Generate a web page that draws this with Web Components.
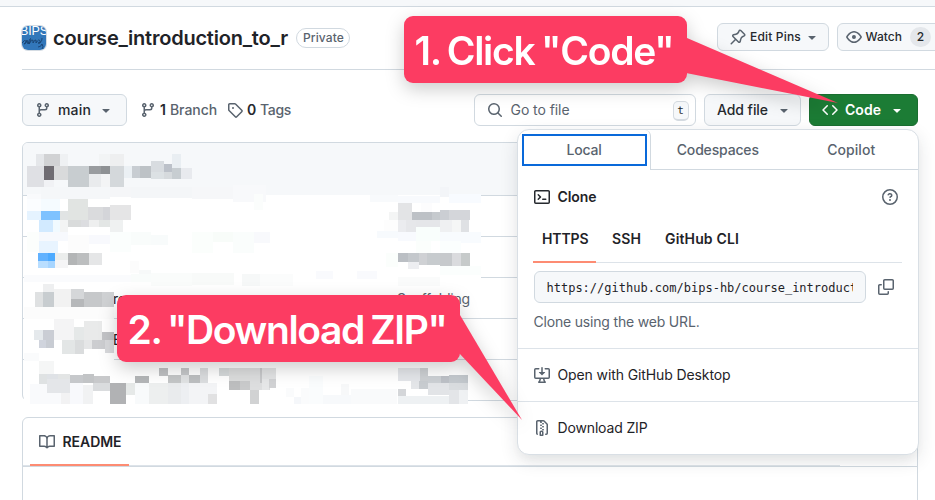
<!DOCTYPE html>
<html lang="en"><head><meta charset="utf-8"><title>course_introduction_to_r</title>
<style>
html,body{margin:0;padding:0;background:#fff}
body{width:935px;height:500px;overflow:hidden;font:14px/20px Inter,"Liberation Sans",sans-serif;color:#1f2328}
</style></head><body>
<repo-page></repo-page>
<script>
const ICONS={
branch:'M9.5 3.25a2.25 2.25 0 1 1 3 2.122V6A2.5 2.5 0 0 1 10 8.5H6a1 1 0 0 0-1 1v1.128a2.251 2.251 0 1 1-1.5 0V5.372a2.25 2.25 0 1 1 1.5 0v1.836A2.493 2.493 0 0 1 6 7h4a1 1 0 0 0 1-1v-.628A2.25 2.25 0 0 1 9.5 3.25Zm-6 0a.75.75 0 1 0 1.5 0 .75.75 0 0 0-1.5 0Zm8.25-.75a.75.75 0 1 0 0 1.5.75.75 0 0 0 0-1.5ZM4.25 12a.75.75 0 1 0 0 1.5.75.75 0 0 0 0-1.5Z',
tag:'M1 7.775V2.75C1 1.784 1.784 1 2.75 1h5.025c.464 0 .91.184 1.238.513l6.25 6.25a1.75 1.75 0 0 1 0 2.474l-5.026 5.026a1.75 1.75 0 0 1-2.474 0l-6.25-6.25A1.752 1.752 0 0 1 1 7.775Zm1.5 0c0 .066.026.13.073.177l6.25 6.25a.25.25 0 0 0 .354 0l5.025-5.025a.25.25 0 0 0 0-.354l-6.25-6.25a.25.25 0 0 0-.177-.073H2.75a.25.25 0 0 0-.25.25ZM6 5a1 1 0 1 1 0 2 1 1 0 0 1 0-2Z',
pin:'m11.294.984 3.722 3.722a1.75 1.75 0 0 1-.504 2.826l-1.327.613a3.089 3.089 0 0 0-1.707 2.084l-.584 2.454c-.317 1.332-1.972 1.8-2.94.832L5.75 11.311 1.78 15.28a.749.749 0 1 1-1.06-1.06l3.969-3.97-2.204-2.204c-.968-.968-.5-2.623.832-2.94l2.454-.584a3.08 3.08 0 0 0 2.084-1.707l.613-1.327a1.75 1.75 0 0 1 2.826-.504ZM6.283 9.723l2.732 2.731a.25.25 0 0 0 .42-.119l.584-2.454a4.586 4.586 0 0 1 2.537-3.098l1.328-.613a.25.25 0 0 0 .072-.404l-3.722-3.722a.25.25 0 0 0-.404.072l-.613 1.328a4.584 4.584 0 0 1-3.098 2.537l-2.454.584a.25.25 0 0 0-.119.42l2.731 2.732Z',
eye:'M8 2c1.981 0 3.671.992 4.933 2.078 1.27 1.091 2.187 2.345 2.637 3.023a1.62 1.62 0 0 1 0 1.798c-.45.678-1.367 1.932-2.637 3.023C11.67 13.008 9.981 14 8 14c-1.981 0-3.671-.992-4.933-2.078C1.797 10.83.88 9.576.43 8.898a1.62 1.62 0 0 1 0-1.798c.45-.677 1.367-1.931 2.637-3.022C4.33 2.992 6.019 2 8 2ZM1.679 7.932a.12.12 0 0 0 0 .136c.411.622 1.241 1.75 2.366 2.717C5.176 11.758 6.527 12.5 8 12.5c1.473 0 2.825-.742 3.955-1.715 1.124-.967 1.954-2.096 2.366-2.717a.12.12 0 0 0 0-.136c-.412-.621-1.242-1.75-2.366-2.717C10.824 4.242 9.473 3.5 8 3.5c-1.473 0-2.825.742-3.955 1.715-1.124.967-1.954 2.096-2.366 2.717ZM8 10a2 2 0 1 1-.001-3.999A2 2 0 0 1 8 10Z',
search:'M10.68 11.74a6 6 0 0 1-7.922-8.982 6 6 0 0 1 8.982 7.922l3.04 3.04a.749.749 0 1 1-1.06 1.06ZM11.5 7a4.499 4.499 0 1 0-8.997 0A4.499 4.499 0 0 0 11.5 7Z',
code:'m11.28 3.22 4.25 4.25a.75.75 0 0 1 0 1.06l-4.25 4.25a.749.749 0 1 1-1.06-1.06L13.94 8l-3.72-3.72a.749.749 0 1 1 1.06-1.06Zm-6.56 0a.75.75 0 0 1 1.042.018.75.75 0 0 1 .018 1.042L2.06 8l3.72 3.72a.749.749 0 1 1-1.06 1.06L.47 8.53a.75.75 0 0 1 0-1.06Z',
terminal:'M0 2.75C0 1.784.784 1 1.75 1h12.5c.966 0 1.75.784 1.75 1.75v10.5A1.75 1.75 0 0 1 14.25 15H1.75A1.75 1.75 0 0 1 0 13.25Zm1.75-.25a.25.25 0 0 0-.25.25v10.5c0 .138.112.25.25.25h12.5a.25.25 0 0 0 .25-.25V2.75a.25.25 0 0 0-.25-.25ZM7.25 8a.749.749 0 0 1-.22.53l-2.25 2.25a.749.749 0 1 1-1.06-1.06L5.44 8 3.72 6.28a.749.749 0 1 1 1.06-1.06l2.25 2.25c.141.14.22.331.22.53Zm1.5 1.5h3a.75.75 0 0 1 0 1.5h-3a.75.75 0 0 1 0-1.5Z',
question:'M0 8a8 8 0 1 1 16 0A8 8 0 0 1 0 8Zm8-6.5a6.5 6.5 0 1 0 0 13 6.5 6.5 0 0 0 0-13ZM6.92 6.085h.001a.749.749 0 1 1-1.342-.67c.169-.339.436-.701.849-.977C6.845 4.16 7.369 4 8 4a2.756 2.756 0 0 1 1.637.525c.503.377.863.965.863 1.725 0 .448-.115.83-.329 1.15-.205.307-.47.513-.692.662-.109.072-.22.138-.313.195l-.006.004a6.24 6.24 0 0 0-.26.16.952.952 0 0 0-.276.245.75.75 0 0 1-1.248-.832c.184-.264.42-.489.692-.661.103-.067.207-.132.313-.195l.007-.004c.1-.061.182-.11.258-.161a.969.969 0 0 0 .277-.245C8.96 6.514 9 6.427 9 6.25a.612.612 0 0 0-.262-.525A1.27 1.27 0 0 0 8 5.5c-.369 0-.595.09-.74.187a1.01 1.01 0 0 0-.34.398ZM9 11a1 1 0 1 1-2 0 1 1 0 0 1 2 0Z',
copy:'M0 6.75C0 5.784.784 5 1.75 5h1.5a.75.75 0 0 1 0 1.5h-1.5a.25.25 0 0 0-.25.25v7.5c0 .138.112.25.25.25h7.5a.25.25 0 0 0 .25-.25v-1.5a.75.75 0 0 1 1.5 0v1.5A1.75 1.75 0 0 1 9.25 16h-7.5A1.75 1.75 0 0 1 0 14.25ZM5 1.75C5 .784 5.784 0 6.75 0h7.5C15.216 0 16 .784 16 1.75v7.5A1.75 1.75 0 0 1 14.25 11h-7.5A1.75 1.75 0 0 1 5 9.25Zm1.75-.25a.25.25 0 0 0-.25.25v7.5c0 .138.112.25.25.25h7.5a.25.25 0 0 0 .25-.25v-7.5a.25.25 0 0 0-.25-.25Z',
desktop:'m4.927 5.427 2.896 2.896a.25.25 0 0 0 .354 0l2.896-2.896A.25.25 0 0 0 10.896 5H8.75V.75a.75.75 0 1 0-1.5 0V5H5.104a.25.25 0 0 0-.177.427Z M1.573 2.573a.25.25 0 0 0-.073.177v7.5a.25.25 0 0 0 .25.25h12.5a.25.25 0 0 0 .25-.25v-7.5a.25.25 0 0 0-.25-.25h-3a.75.75 0 1 1 0-1.5h3A1.75 1.75 0 0 1 16 2.75v7.5A1.75 1.75 0 0 1 14.25 12h-3.727c.099 1.041.52 1.872 1.292 2.757A.752.752 0 0 1 11.25 16h-6.5a.75.75 0 0 1-.565-1.243c.772-.885 1.192-1.716 1.292-2.757H1.75A1.75 1.75 0 0 1 0 10.25v-7.5A1.75 1.75 0 0 1 1.75 1h3a.75.75 0 0 1 0 1.5h-3a.25.25 0 0 0-.177.073ZM6.982 12a5.72 5.72 0 0 1-.765 2.5h3.566a5.72 5.72 0 0 1-.765-2.5H6.982Z',
zip:'M3.5 1.75v11.5c0 .09.048.173.126.217a.75.75 0 0 1-.752 1.298A1.748 1.748 0 0 1 2 13.25V1.75C2 .784 2.784 0 3.75 0h5.586c.464 0 .909.185 1.237.513l2.914 2.914c.329.328.513.773.513 1.237v8.586A1.75 1.75 0 0 1 12.25 15h-.5a.75.75 0 0 1 0-1.5h.5a.25.25 0 0 0 .25-.25V4.664a.25.25 0 0 0-.073-.177L9.513 1.573a.25.25 0 0 0-.177-.073H7.25a.75.75 0 0 1 0 1.5h-.5a.75.75 0 0 1-.75-.75V1.5H3.75a.25.25 0 0 0-.25.25Zm3.75 8.75h.5c.966 0 1.75.784 1.75 1.75v3a.75.75 0 0 1-.75.75h-2.5a.75.75 0 0 1-.75-.75v-3c0-.966.784-1.75 1.75-1.75ZM6 5.25a.75.75 0 0 1 .75-.75h.5a.75.75 0 0 1 0 1.5h-.5A.75.75 0 0 1 6 5.25Zm.75 2.25h.5a.75.75 0 0 1 0 1.5h-.5a.75.75 0 0 1 0-1.5ZM8 6.75A.75.75 0 0 1 8.75 6h.5a.75.75 0 0 1 0 1.5h-.5A.75.75 0 0 1 8 6.75ZM8.75 3h.5a.75.75 0 0 1 0 1.5h-.5a.75.75 0 0 1 0-1.5ZM8 9.75A.75.75 0 0 1 8.75 9h.5a.75.75 0 0 1 0 1.5h-.5A.75.75 0 0 1 8 9.75ZM7 12.25v2.25h1v-2.25a.25.25 0 0 0-.25-.25h-.5a.25.25 0 0 0-.25.25Z',
book:'M0 1.75A.75.75 0 0 1 .75 1h4.253c1.227 0 2.317.59 3 1.501A3.743 3.743 0 0 1 11.006 1h4.245a.75.75 0 0 1 .75.75v10.5a.75.75 0 0 1-.75.75h-4.507a2.25 2.25 0 0 0-1.591.659l-.622.621a.75.75 0 0 1-1.06 0l-.622-.621A2.25 2.25 0 0 0 5.258 13H.75a.75.75 0 0 1-.75-.75Zm7.251 10.324.004-5.073-.002-2.253A2.25 2.25 0 0 0 5.003 2.5H1.5v9h3.757a3.75 3.75 0 0 1 1.994.574ZM8.755 4.75l-.004 7.322a3.752 3.752 0 0 1 1.992-.572H14.5v-9h-3.495a2.25 2.25 0 0 0-2.25 2.25Z',
caret:'m4.427 7.427 3.396 3.396a.25.25 0 0 0 .354 0l3.396-3.396A.25.25 0 0 0 11.396 7H4.604a.25.25 0 0 0-.177.427Z'
};
function define(name,html,setup){
  const t=document.createElement('template');t.innerHTML=html;
  customElements.define(name,class extends HTMLElement{
    constructor(){super();this.attachShadow({mode:'open'}).append(t.content.cloneNode(true))}
    connectedCallback(){setup&&setup(this,this.shadowRoot)}
  });
}
/* Label whose letter spacing is tuned so that it fills the width in "w". */
define('fit-text','<style>:host{display:block;white-space:nowrap;flex:none}span{display:inline-block}</style><span><slot></slot></span>',(h,r)=>{
  const w=+h.getAttribute('w'),s=r.querySelector('span'),n=[...h.textContent].length;
  h.style.width=w+'px';
  s.style.letterSpacing=((w-s.getBoundingClientRect().width)/n).toFixed(4)+'px';
});
define('oct-icon','<style>:host{display:block;flex:none;color:#59636e}svg{display:block;fill:currentColor}</style><svg viewBox="0 0 16 16"><path/></svg>',(h,r)=>{
  const s=h.getAttribute('size')||16,v=r.querySelector('svg');v.setAttribute('width',s);v.setAttribute('height',s);
  v.firstChild.setAttribute('d',ICONS[h.getAttribute('name')]);
});
define('ui-button',`<style>:host{display:flex;align-items:center;box-sizing:border-box;height:32px;flex:none;border:1px solid #d1d9e0;border-radius:6px;background:#f6f8fa;font-weight:500;color:#25292e}
:host([small]){height:28px;font-size:12px}:host([primary]){background:#1c7c35;border-color:#1a6e30;color:#fff;font-weight:600}</style><slot></slot>`);
define('repo-avatar',`<style>:host{display:block;flex:none;width:24px;height:24px;border-radius:6px;overflow:hidden;box-shadow:0 0 0 1px #d5dce3}svg{display:block}</style>
<svg width="24" height="24"><rect width="24" height="24" fill="#3277ba"/><text x="-2" y="9" font-family="Liberation Sans" font-size="12.5" fill="#fff" textLength="28">BIPS</text><path d="M0 17q3-4 4-2t-2 3q2 0 3-4l1 4q2-7 3-5l-2 5q3-5 4-4v3q2-4 3-3v3q3-5 4-2t-2 2q4 0 4-5M16 21q3 0 4-3 2 3 0 5" fill="none" stroke="#163c68" stroke-width=".8"/></svg>`);
define('repo-header',`<style>:host{display:flex;box-sizing:border-box;height:63px;margin-left:22px;border-bottom:1px solid #d1d9e0;padding-top:16px}
.l{display:flex;align-items:center;height:30px}.t{font-size:20px;font-weight:600;margin-left:7px;line-height:30px}
.p{box-sizing:border-box;width:54px;height:20px;border:1px solid #d1d9e0;border-radius:10px;padding-left:6px;font-size:12px;line-height:18px;font-weight:500;color:#59636e;margin-left:8px}
.r{display:flex;gap:8px;margin-left:367px}.e{width:112px;padding-left:12px}.w{width:130px;padding-left:8px}
.n{box-sizing:border-box;width:21px;height:20px;border-radius:10px;background:#e4e7eb;line-height:20px;text-align:center;margin-left:8px;flex:none}</style>
<div class="l"><repo-avatar></repo-avatar><fit-text class="t" w="235">course_introduction_to_r</fit-text><div class="p"><fit-text w="41">Private</fit-text></div></div>
<div class="r"><ui-button small class="e"><oct-icon name="pin"></oct-icon><fit-text w="51" style="margin-left:4px">Edit Pins</fit-text><oct-icon name="caret" style="margin-left:3px"></oct-icon></ui-button>
<ui-button small class="w"><oct-icon name="eye"></oct-icon><fit-text w="36.5" style="margin-left:3.5px">Watch</fit-text><span class="n">2</span></ui-button></div>`);
define('repo-toolbar',`<style>:host{display:flex;width:896px;margin:24px 0 0 22px;height:32px;align-items:center}
.m{width:105px;padding-left:12px}.g{color:#59636e;font-weight:500}.b{color:#25292e;font-weight:600}
.s{display:flex;align-items:center;box-sizing:border-box;width:222px;height:32px;border:1px solid #d1d9e0;border-radius:6px;padding-left:12px;color:#59636e;margin-left:183px;flex:none;background:#fff}
.k{box-sizing:border-box;width:16px;height:20px;border:1px solid #d5dbe1;border-bottom-width:2px;border-radius:5px;background:#f6f8fa;font:11px/17px "DejaVu Sans Mono",monospace;color:#25292e;text-align:center;margin:2px 0 0 103px}
.a{width:97px;margin-left:8px;padding-left:12px}.c{width:109px;margin-left:8px;padding-left:12px}</style>
<ui-button class="m"><oct-icon name="branch"></oct-icon><fit-text w="33" style="margin-left:7px">main</fit-text><oct-icon name="caret" style="margin-left:7px"></oct-icon></ui-button>
<oct-icon name="branch" style="margin-left:13px"></oct-icon><fit-text class="b" w="7" style="margin-left:4px">1</fit-text><fit-text class="g" w="47" style="margin-left:3px">Branch</fit-text>
<oct-icon name="tag" style="margin-left:10px"></oct-icon><fit-text class="b" w="9" style="margin-left:4px">0</fit-text><fit-text class="g" w="31" style="margin-left:4px">Tags</fit-text>
<div class="s"><oct-icon name="search"></oct-icon><fit-text w="59" style="margin-left:7.5px">Go to file</fit-text><div class="k">t</div></div>
<ui-button class="a"><fit-text w="51">Add file</fit-text><oct-icon name="caret" style="margin-left:8px"></oct-icon></ui-button>
<ui-button primary class="c"><oct-icon name="code" style="color:#fff"></oct-icon><fit-text w="36" style="margin-left:7px">Code</fit-text><oct-icon name="caret" style="margin-left:8px;color:#fff"></oct-icon></ui-button>`);
/* Redaction blocks: x y width height colour, in thirds of a pixel from each group's origin. */
const MOSAIC=[[10,135,`51 156 250 25 f6f8fa|93 156 207 36 f5f7f9|300 156 186 30 f5f6f8|363 156 184 33 f4f6f8|546 156 123 35 f6f7f9|669 150 100 50 f8f9fb|732 178 27 46 fbfdfc|51 176 42 27 f9fafc
51 192 42 36 fbfdff|93 192 57 36 f5fbff|78 57 24 36 e5e7ea|102 57 48 36 d1d2d4|150 57 24 36 eff1f3|51 93 51 63 dfe0e4|102 93 30 42 6f6c72|102 135 30 20 f1f2f5|132 93 42 42 d9dadb|174 93 63 63 c8cdd0|237 93 36 24 999c9f|273 93 27 24 8e9194|237 117 36 38 e9ebed|273 117 27 38 f3f4f5|267 57 33 36 f2f4f5|300 57 42 36 eeeff0|300 93 42 63 d4d8db|342 93 24 36 ebf0f4|366 93 24 36 c8cdd2|390 93 33 36 bdc2c6|423 78 39 33 d8dce0|423 111 39 21 dce1e4|462 87 24 24 bcc1c9|462 111 24 21 d6dadd|486 57 27 42 e9eef2|486 99 27 33 c7cdd1|513 99 33 33 e8eaee
51 228 42 27 e5f3ff|93 228 57 27 7ec2ff|87 255 42 36 d2eaff|129 255 24 36 f1faff|150 228 24 27 e1e4e4|150 255 24 36 f3f4f4|174 192 60 63 e1e4e2|234 216 45 39 dadbdd|279 216 21 39 d4d5d9|300 210 63 45 e5e5e6|174 255 39 21 d9dbdb|213 255 24 21 dcdde0|237 255 30 21 eeefef|267 255 33 21 e3e6e5|300 255 39 36 eff1f1
87 291 87 27 f7f9fd|51 291 36 60 fcfefc|174 300 63 51 fcfcfc|237 300 63 27 f8f9fd|300 291 63 60 fbfefd|363 291 60 40 f9fcfb|423 300 50 30 f8fbfb|546 291 63 62 fbfefc|609 291 60 30 f8fcf9|669 291 63 62 fafdfc|732 291 48 33 f8f9fc
87 318 57 36 e8f4ff|84 354 30 24 61b2ff|114 354 21 24 4caaff|84 378 30 21 b9deff|114 378 21 21 a7d5ff|135 354 39 21 ebedec|135 375 39 24 f5f5f6|174 354 27 36 b3b5b6|201 354 36 36 bcbebf|237 354 39 36 e5e6e7|360 378 27 35 fcfcfc|387 405 36 15 f7f9f9`],
[370,135,`0 180 84 21 f8fafc|84 182 126 22 f8fafd|210 156 27 30 f3f5f8|237 178 96 26 f8fbff|84 204 42 51 e3e4e6|153 204 33 27 fcfcfd|57 231 27 24 f4f5f5|126 231 60 24 bdc1c6|186 231 24 24 c6cace|210 225 27 30 cbced3|237 225 63 30 d4d6da|42 255 42 33 fdfdfd|84 255 24 36 ebecef|108 255 30 36 e6e7ea|138 255 72 21 e5e6e9|210 255 36 36 eff0f2|246 255 27 36 f5f6f6|273 255 24 36 dfe1e4|138 276 72 42 f9fefc|21 288 63 20 f7fafd|84 291 54 27 f8fafe|210 291 123 32 f8fbfe|138 318 45 36 fbfefc|210 318 63 36 fbfefe
48 354 36 42 fbfefc|84 354 30 27 bbbfc4|114 354 33 27 c4c8cc|114 381 33 21 edeef1|147 354 24 36 cfd1d4|171 354 39 36 c7cbce|210 354 36 39 c6c9cc|246 354 27 39 dadbde|273 354 27 39 c6caca|210 393 123 27 fbfefd`],
[10,270,`42 15 320 20 fafbfd|363 12 60 25 f9fcfb|423 10 122 38 fafcfb|546 10 125 36 f8faf9|695 12 85 36 f6f8f8
99 42 33 24 eeeff0|75 66 24 45 dfe1e2|99 66 33 45 c8cdd0|132 57 51 54 f2f2f2|183 57 39 30 d5d7d9|183 87 39 24 b6b8ba|222 66 54 45 c6c8ca|276 66 36 45 cfd1d3|42 111 270 35 fcfcfc
132 147 60 63 f4f4f5|192 171 30 40 e5e8e8|222 153 54 57 e9eaea|72 180 27 30 e5e9ec|99 180 33 30 cacdd4|87 210 21 24 d0d4dd|108 210 24 24 c8ccd3|156 210 39 42 e3e6e6|195 210 27 42 dadcdd|222 210 24 27 e5e6e7|246 210 39 27 cccdd0|276 186 36 24 c2c3c6|285 210 27 39 d8d9dc|42 249 45 24 fafbfc|87 273 45 39 f5f6f6
87 312 24 30 dfe2e3|111 312 33 15 dfe2e6|111 327 69 42 e4e6e9|144 312 36 15 e3e5e5|180 315 39 24 c6c8cb|219 312 33 27 c2c4c6|252 318 48 21 c8c9cb|249 339 51 24 dadcde|60 342 93 60 f9fafc|111 342 69 27 e4e6e9|153 369 27 33 f2f2f3|180 339 39 63 f8f9fc|219 345 30 57 f1f2f3|300 339 48 63 b1b2b4|348 339 27 36 e6e9e8|375 318 42 21 b4b6b8|375 339 42 63 f8fafb|417 339 57 63 edefef|474 339 39 63 e9ebed|513 339 24 63 edeff2|537 339 84 63 f3f4f6|447 294 27 24 bfc1c3|474 315 39 24 c4c6c7|513 294 24 21 c5c7c9|513 315 24 24 e0e2e3|537 315 33 24 bdbfc1|570 294 24 45 dbdddf|594 372 27 30 e1e1e2|627 294 30 24 d5d9da|657 294 63 39 dcdddd|657 333 33 27 bdbebf|690 333 30 27 c9cacb|720 294 60 66 dddedf|720 360 27 42 d1d2d3`],
[260,270,`168 3 50 24 f9fafd|0 12 100 36 fbfcfc|414 21 126 27 fafbfb|290 2 60 25 f9fafd
0 294 6 45 c7c8ca|6 294 42 33 e2e3e4|6 327 21 33 e6e7e8|27 327 21 27 d1d2d4|147 318 42 84 fafcfd|78 354 24 27 fafbfc|102 381 21 21 f5f7fa|123 354 24 48 fafbfc|189 375 84 27 f7f9fb|243 342 24 33 f7f8f9|273 357 138 45 f9fafb
414 294 66 39 e4e6ea|480 294 24 39 cdd0d3|453 333 24 24 e4e6e9|477 333 27 24 c8ccd0|504 318 39 21 ccd0d4|543 318 24 21 bdc1c7|567 315 57 24 c4c9ce|504 339 63 36 e2e4e7|567 339 57 21 d9dcdf|567 360 30 42 e3e5e8|597 360 27 42 eff1f3|414 357 24 21 d4d6d9|414 378 153 24 eef1f3`]];
define('mosaic-cover','<style>:host{display:block}svg{display:block}</style><svg width="935" height="500" shape-rendering="crispEdges"></svg>',(h,r)=>{
  let out='<path fill="#fff" d="M27 195h454v91H24v-14h3zM24 286h90v115H24zM30 362h438v42H30z"/>';
  for(const m of MOSAIC){
    const body=m[2].split(/[|\n]/).map(s=>{const a=s.trim().split(' ');
      return `<rect x="${a[0]}" y="${a[1]}" width="${a[2]}" height="${a[3]}" fill="#${a[4]}"/>`}).join('');
    out+=`<g transform="translate(${m[0]} ${m[1]}) scale(.333333)">${body}</g>`;
  }
  r.querySelector('svg').innerHTML=out;
});
define('file-table',`<style>:host{display:block;box-sizing:border-box;width:896px;height:259px;margin:16px 0 0 22px;border:1px solid #d1d9e0;border-radius:6px;overflow:hidden}
.h{height:52px;background:#f6f8fa}.r{display:flex;box-sizing:border-box;height:41px;border-top:1px solid #d1d9e0;align-items:center;padding:2px 0 0 90px}.d{color:#59636e}</style>
<div class="h"></div><div class="r"></div><div class="r"></div><div class="r"><fit-text w="13">ro</fit-text><fit-text class="d" w="73" style="margin-left:271px">Scaffolding</fit-text></div><div class="r"><fit-text w="9">E</fit-text></div><div class="r"></div>`);
define('readme-box',`<style>:host{display:block;box-sizing:border-box;width:896px;height:100px;margin:16px 0 0 22px;border:1px solid #d1d9e0;border-radius:6px}
.h{height:48px;border-bottom:1px solid #d1d9e0;padding-left:7px;display:flex;background:linear-gradient(#dde3e9,#dde3e9) 0 100%/817px 1px no-repeat}
.t{box-sizing:border-box;width:99px;height:48px;display:flex;align-items:center;padding:2px 0 0 9px;gap:7.5px;border-bottom:2px solid #fd8c73;font-weight:600}oct-icon{margin-top:-1px}</style>
<div class="h"><div class="t"><oct-icon name="book"></oct-icon><fit-text w="59">README</fit-text></div></div>`);
define('clone-menu',`<style>:host{display:block;box-sizing:border-box;width:402px;height:326px;border:1px solid #d9dfe5;border-radius:12px;background:#fff;box-shadow:0 6px 12px -3px #25292e0a,0 6px 18px #25292e1f;overflow:hidden}
.tabs{display:flex;height:40px;font-weight:500;color:#59636e}
.tab{box-sizing:border-box;width:134px;display:flex;justify-content:center;align-items:center;border-bottom:1px solid #d1d9e0}
.on{width:133px;flex:none;padding:4px;border:0;border-right:1px solid #d1d9e0;border-top-right-radius:6px}
.f{box-sizing:border-box;width:125px;flex:none;height:32px;border:2px solid #0969da;display:flex;align-items:center;justify-content:center}
.c{padding:17px 16px 0 15px}.q{display:flex;align-items:center;height:20px;font-weight:600}
.p{display:flex;box-sizing:border-box;height:44px;margin-top:12px;width:369px;border-bottom:1px solid #dde3e9;font-weight:600}
.p div{display:flex;align-items:center;height:44px;box-sizing:border-box;padding:0 0 4px 9px}.p .sel{width:63px;border-bottom:2px solid #fd8c73;padding-bottom:2px}
.u{display:flex;align-items:center;margin-top:8px}.i{box-sizing:border-box;width:332px;height:32px;border:1px solid #d1d9e0;border-radius:6px;background:#f6f8fa;padding:0 12px 0 11.5px;margin-left:1px}
.i span{display:block;overflow:hidden;white-space:nowrap;font:12px/32px "DejaVu Sans Mono",monospace;height:30px}
.n{margin:9px 0 0 .5px;color:#59636e}.o{display:flex;align-items:center;box-sizing:border-box;height:53px;border-top:1px solid #dde3e9;padding-left:16px;gap:8px}.o fit-text{margin-left:-.5px}</style>
<div class="tabs"><div class="tab on"><div class="f"><fit-text w="35">Local</fit-text></div></div><div class="tab"><fit-text w="82">Codespaces</fit-text></div><div class="tab"><fit-text w="48">Copilot</fit-text></div></div>
<div class="c"><div class="q"><oct-icon name="terminal" style="color:#25292e;margin-left:1px"></oct-icon><fit-text w="39" style="margin-left:7.5px">Clone</fit-text><oct-icon name="question" style="margin-left:285.5px"></oct-icon></div>
<div class="p"><div class="sel"><fit-text w="46.5">HTTPS</fit-text></div><div style="padding-left:16px"><fit-text w="29">SSH</fit-text></div><div style="padding-left:24px"><fit-text w="74">GitHub CLI</fit-text></div></div>
<div class="u"><div class="i"><span>https://github.com/bips-hb/course_introduction_to_r.git</span></div><oct-icon name="copy" style="margin-left:12px"></oct-icon></div>
<fit-text class="n" w="166">Clone using the web URL.</fit-text></div>
<div class="o" style="margin-top:16px"><oct-icon name="desktop"></oct-icon><fit-text w="173">Open with GitHub Desktop</fit-text></div>
<div class="o"><oct-icon name="zip"></oct-icon><fit-text w="90">Download ZIP</fit-text></div>`);
define('note-callout',`<style>:host{display:block;filter:drop-shadow(0 6px 9px #0003)}
.b{box-sizing:border-box;width:var(--w);height:67px;border-radius:9px;background:#fc3c62;color:#fff;font-size:39px;line-height:70px;font-weight:600;padding-left:10.5px;word-spacing:-2px}
svg{position:absolute;left:var(--w);top:0;overflow:visible;margin-left:-1px}</style><div class="b"><slot></slot></div><svg width="1" height="1"><path fill="#fc3c62"/></svg>`,(h,r)=>r.querySelector('path').setAttribute('d',h.getAttribute('tail')));
define('repo-page',`<style>:host{display:block;position:relative;width:935px;height:500px;overflow:hidden}
.top{box-sizing:border-box;height:7px;background:#f6f8fa;border-bottom:1px solid #d1d9e0}
.over{position:absolute}</style>
<div class="top"></div><repo-header></repo-header><repo-toolbar></repo-toolbar><file-table></file-table><readme-box></readme-box>
<mosaic-cover class="over" style="left:0;top:0"></mosaic-cover>
<clone-menu class="over" style="left:517px;top:129px"></clone-menu>
<note-callout class="over" style="--w:283px;left:404px;top:16px" tail="M0 22L1 22L152 87L0 57Z"><fit-text w="259">1. Click "Code"</fit-text></note-callout>
<note-callout class="over" style="--w:343px;left:117px;top:295px" tail="M0 19L1 20L63 125L0 58Z"><fit-text w="319">2. "Download ZIP"</fit-text></note-callout>`);
</script></body></html>
